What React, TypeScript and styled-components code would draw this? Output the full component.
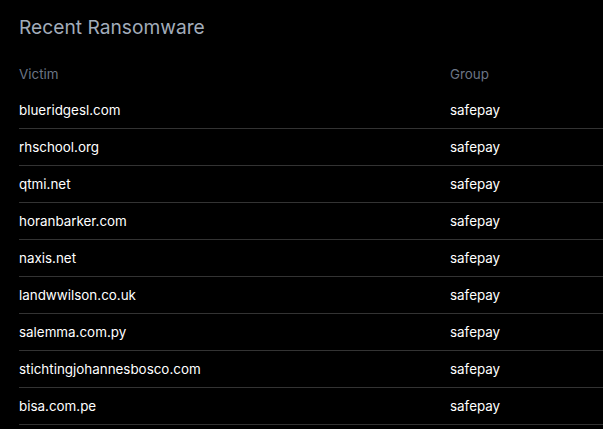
import React from "react";
import styled, { createGlobalStyle } from "styled-components";

const Global = createGlobalStyle`
  html, body { margin: 0; padding: 0; background: #000; overflow: hidden; }
  body { font-family: Inter, "Noto Sans", sans-serif; }
`;

const Panel = styled.section`
  padding: 12px 0 0 19px;
  background: #000;
  min-height: 429px;
  box-sizing: border-box;
`;

const Title = styled.h2`
  margin: 0 0 13px 0;
  font-size: 19.2px;
  line-height: 30px;
  font-weight: 400;
  color: #a2acba;
`;

const Row = styled.div<{ $head?: boolean }>`
  display: grid;
  grid-template-columns: 431px 1fr;
  align-items: center;
  height: ${(p) => (p.$head ? "37px" : "36px")};
  border-bottom: ${(p) => (p.$head ? "none" : "1px solid #333")};
  font-size: 13.4px;
  color: ${(p) => (p.$head ? "#6b7585" : "#fff")};
`;

const Cell = styled.span``;

const rows = [
  "blueridgesl.com",
  "rhschool.org",
  "qtmi.net",
  "horanbarker.com",
  "naxis.net",
  "landwwilson.co.uk",
  "salemma.com.py",
  "stichtingjohannesbosco.com",
  "bisa.com.pe",
];

export default function App() {
  return (
    <>
      <Global />
      <Panel>
        <Title>Recent Ransomware</Title>
        <Row $head>
          <Cell>Victim</Cell>
          <Cell>Group</Cell>
        </Row>
        {rows.map((r) => (
          <Row key={r}>
            <Cell>{r}</Cell>
            <Cell>safepay</Cell>
          </Row>
        ))}
      </Panel>
    </>
  );
}
